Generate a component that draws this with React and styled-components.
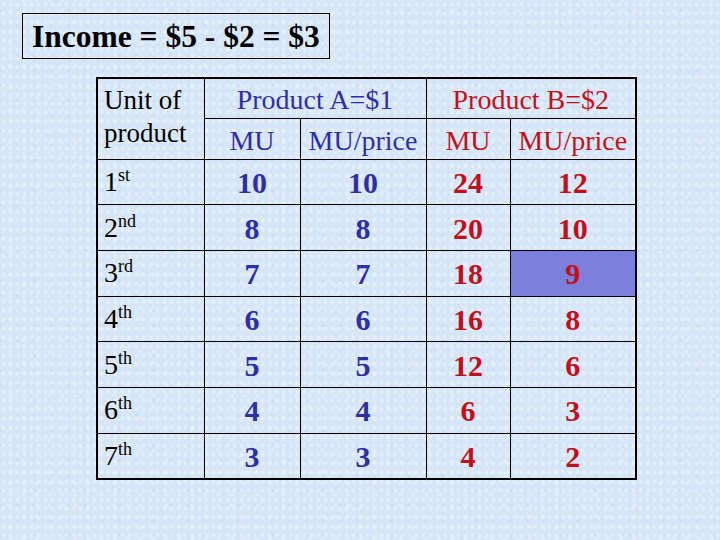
import React from "react";
import styled, { createGlobalStyle } from "styled-components";

const GlobalStyle = createGlobalStyle`
  html, body {
    margin: 0;
    padding: 0;
  }
  body {
    font-family: "Liberation Serif", "Times New Roman", serif;
  }
`;

const BLUE = "#2e2ea6";
const RED = "#c0101c";

const Slide = styled.div`
  width: 720px;
  height: 540px;
  box-sizing: border-box;
  padding: 13px 0 0 22px;
  overflow: hidden;
  background-color: #d6e6f7;
  background-image:
    radial-gradient(rgba(255, 255, 255, 0.35) 1px, transparent 2.5px),
    radial-gradient(rgba(255, 255, 255, 0.25) 1.5px, transparent 3px),
    radial-gradient(rgba(175, 200, 228, 0.25) 1px, transparent 2.5px);
  background-size: 7px 9px, 13px 11px, 17px 15px;
  background-position: 0 0, 4px 5px, 9px 3px;
`;

const TitleBox = styled.div`
  display: inline-block;
  box-sizing: border-box;
  height: 46px;
  padding: 0 9px;
  border: 1px solid #000;
  font-size: 31.5px;
  font-weight: bold;
  line-height: 45px;
  color: #000;
  white-space: nowrap;
`;

const Table = styled.table`
  margin: 18px 0 0 74px;
  border-collapse: collapse;
  table-layout: fixed;
  width: 539px;
  border: 2px solid #000;
`;

const Cell = styled.td`
  border: 1px solid #000;
  padding: 0;
  font-weight: normal;
  text-align: ${(p) => (p.$left ? "left" : "center")};
  padding-left: ${(p) => (p.$left ? "6px" : "0")};
  vertical-align: middle;
  white-space: nowrap;
  background: ${(p) => (p.$hl ? "#7c80dc" : "transparent")};
`;

const HeadCell = styled(Cell)`
  box-sizing: border-box;
  font-size: 28px;
  line-height: 33px;
  padding-top: 3px;
  color: ${(p) => p.$color || "#000"};
  height: ${(p) => p.$h || 40}px;
`;

const UnitCell = styled(HeadCell)`
  vertical-align: top;
  padding-top: 5px;
  font-size: 27px;
`;

const LabelCell = styled(Cell)`
  height: 44.7px;
  font-size: 28px;
  line-height: 30px;
  color: #000;
`;

const Sup = styled.sup`
  font-size: 18px;
  line-height: 0;
  vertical-align: 10px;
`;

const NumCell = styled(Cell)`
  font-size: 30px;
  font-weight: bold;
  line-height: 30px;
  padding-top: 2px;
  color: ${(p) => (p.$red ? RED : BLUE)};
`;

const rows = [
  ["1", "st", 10, 10, 24, 12],
  ["2", "nd", 8, 8, 20, 10],
  ["3", "rd", 7, 7, 18, 9],
  ["4", "th", 6, 6, 16, 8],
  ["5", "th", 5, 5, 12, 6],
  ["6", "th", 4, 4, 6, 3],
  ["7", "th", 3, 3, 4, 2],
];

export default function App() {
  return (
    <Slide>
      <GlobalStyle />
      <TitleBox>Income = $5 - $2 = $3</TitleBox>
      <Table>
        <colgroup>
          <col style={{ width: 107 }} />
          <col style={{ width: 96 }} />
          <col style={{ width: 126 }} />
          <col style={{ width: 84 }} />
          <col style={{ width: 126 }} />
        </colgroup>
        <thead>
          <tr>
            <UnitCell as="th" rowSpan={2} $left>
              Unit of
              <br />
              product
            </UnitCell>
            <HeadCell as="th" colSpan={2} $color={BLUE} $h={40}>
              Product A=$1
            </HeadCell>
            <HeadCell as="th" colSpan={2} $color={RED} $h={40}>
              Product B=$2
            </HeadCell>
          </tr>
          <tr>
            <HeadCell as="th" $color={BLUE} $h={41}>MU</HeadCell>
            <HeadCell as="th" $color={BLUE} $h={41}>MU/price</HeadCell>
            <HeadCell as="th" $color={RED} $h={41}>MU</HeadCell>
            <HeadCell as="th" $color={RED} $h={41}>MU/price</HeadCell>
          </tr>
        </thead>
        <tbody>
          {rows.map(([n, suf, a1, a2, b1, b2], i) => (
            <tr key={n}>
              <LabelCell $left>
                {n}
                <Sup>{suf}</Sup>
              </LabelCell>
              <NumCell>{a1}</NumCell>
              <NumCell>{a2}</NumCell>
              <NumCell $red>{b1}</NumCell>
              <NumCell $red $hl={i === 2}>{b2}</NumCell>
            </tr>
          ))}
        </tbody>
      </Table>
    </Slide>
  );
}
